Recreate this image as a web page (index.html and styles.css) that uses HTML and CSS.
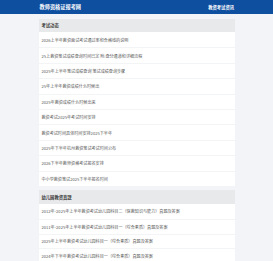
FILE: index.html
```html
<!DOCTYPE html>
<html lang="zh-CN">
<head>
<meta charset="utf-8">
<title>教师资格证报考网</title>
<link rel="stylesheet" href="styles.css">
</head>
<body>
<header class="topbar">
  <div class="topbar-inner">
    <span class="brand">教师资格证报考网</span>
    <span class="nav-link">教资考试资讯</span>
  </div>
</header>
<main class="page">
  <section class="panel">
    <h2 class="panel-title">考试动态</h2>
    <ul class="list">
      <li class="item">2026上半年教资面试考试通过率和合格线的说明</li>
      <li class="item">25上教资笔试成绩查询时间已定 附:查分通道和详细流程</li>
      <li class="item">2025年上半年笔试成绩查询 笔试成绩查询步骤</li>
      <li class="item">25年上半年教资成绩什么时候出</li>
      <li class="item">2025年教资成绩什么时候出来</li>
      <li class="item">教资考试2025年考试时间安排</li>
      <li class="item">教资考试时间具体时间安排2025下半年</li>
      <li class="item">2025年下半年杭州教资笔试考试时间公布</li>
      <li class="item">2026下半年教师资格考试报名安排</li>
      <li class="item">中小学教资笔试2025下半年报名时间</li>
    </ul>
  </section>
  <section class="panel">
    <h2 class="panel-title">幼儿园教资真题</h2>
    <ul class="list list-tight">
      <li class="item">2012年-2025年上半年教资考试幼儿园科目二（保教知识与能力）真题及答案</li>
      <li class="item">2011年-2025年上半年教资考试幼儿园科目一（综合素质）真题及答案</li>
      <li class="item">2025年上半年教资考试幼儿园科目一（综合素质）真题及答案</li>
      <li class="item">2024年下半年教资考试幼儿园科目一（综合素质）真题及答案</li>
    </ul>
  </section>
</main>
</body>
</html>
```
FILE: styles.css
```css
* { box-sizing: border-box; }

html, body {
  margin: 0;
  padding: 0;
}

body {
  background: #f3f4f8;
  font-family: "Noto Sans CJK SC", "Noto Sans", sans-serif;
  color: #333;
}

.topbar {
  background: #0e4f9f;
  height: 14px;
}

.topbar-inner {
  width: 196px;
  height: 100%;
  margin: 0 auto;
  display: flex;
  align-items: center;
  justify-content: space-between;
  padding: 0 0.5px 0 1px;
  color: #fff;
}

.brand {
  font-size: 5.2px;
  font-weight: 700;
  line-height: 1;
}

.nav-link {
  font-size: 4.3px;
  font-weight: 700;
  line-height: 1;
}

.page {
  width: 196px;
  margin: 0 auto;
  display: flex;
  flex-direction: column;
  gap: 4.5px;
  padding-top: 4.5px;
}

.panel {
  background: #fff;
}

.panel-title {
  margin: 0;
  height: 13.5px;
  display: flex;
  align-items: center;
  padding-left: 3px;
  background: #e8e9eb;
  font-size: 4.3px;
  font-weight: 700;
  color: #3a3a3a;
}

.list {
  list-style: none;
  margin: 0;
  padding: 0;
}

.item {
  height: 15.4px;
  display: flex;
  align-items: center;
  padding-left: 3px;
  font-size: 4.1px;
  color: #5a5a5a;
  white-space: nowrap;
  overflow: hidden;
  border-top: 0.5px solid #f3f4f6;
}

.item:first-child {
  border-top: none;
}

.list-tight .item {
  height: 14.8px;
}
```
